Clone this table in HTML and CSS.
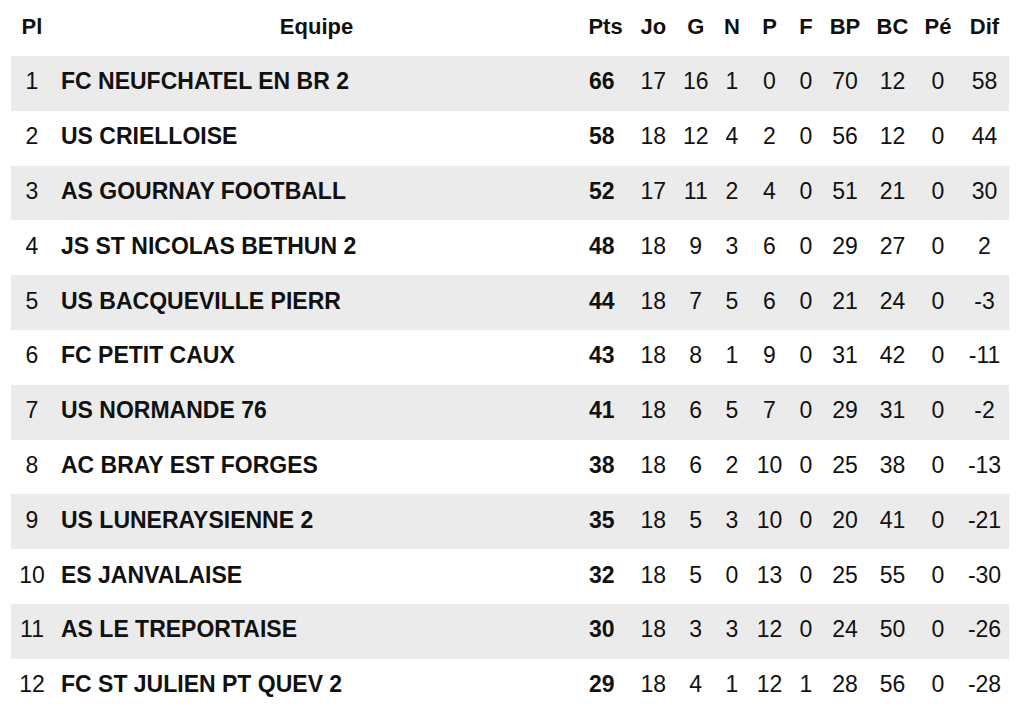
FILE: index.html
```html
<!DOCTYPE html>
<html lang="fr">
<head>
<meta charset="utf-8">
<title>Classement</title>
<link rel="stylesheet" href="styles.css">
</head>
<body>
<table class="standings">
  <colgroup>
    <col class="c-pl"><col class="c-team"><col class="c-pts"><col class="c-jo"><col class="c-g"><col class="c-n"><col class="c-p"><col class="c-f"><col class="c-bp"><col class="c-bc"><col class="c-pe"><col class="c-dif">
  </colgroup>
  <thead>
    <tr><th>Pl</th><th>Equipe</th><th>Pts</th><th>Jo</th><th>G</th><th>N</th><th>P</th><th>F</th><th>BP</th><th>BC</th><th>Pé</th><th>Dif</th></tr>
  </thead>
  <tbody>
    <tr><td>1</td><td class="team">FC NEUFCHATEL EN BR 2</td><td class="pts">66</td><td>17</td><td>16</td><td>1</td><td>0</td><td>0</td><td>70</td><td>12</td><td>0</td><td>58</td></tr>
    <tr><td>2</td><td class="team">US CRIELLOISE</td><td class="pts">58</td><td>18</td><td>12</td><td>4</td><td>2</td><td>0</td><td>56</td><td>12</td><td>0</td><td>44</td></tr>
    <tr><td>3</td><td class="team">AS GOURNAY FOOTBALL</td><td class="pts">52</td><td>17</td><td>11</td><td>2</td><td>4</td><td>0</td><td>51</td><td>21</td><td>0</td><td>30</td></tr>
    <tr><td>4</td><td class="team">JS ST NICOLAS BETHUN 2</td><td class="pts">48</td><td>18</td><td>9</td><td>3</td><td>6</td><td>0</td><td>29</td><td>27</td><td>0</td><td>2</td></tr>
    <tr><td>5</td><td class="team">US BACQUEVILLE PIERR</td><td class="pts">44</td><td>18</td><td>7</td><td>5</td><td>6</td><td>0</td><td>21</td><td>24</td><td>0</td><td>-3</td></tr>
    <tr><td>6</td><td class="team">FC PETIT CAUX</td><td class="pts">43</td><td>18</td><td>8</td><td>1</td><td>9</td><td>0</td><td>31</td><td>42</td><td>0</td><td>-11</td></tr>
    <tr><td>7</td><td class="team">US NORMANDE 76</td><td class="pts">41</td><td>18</td><td>6</td><td>5</td><td>7</td><td>0</td><td>29</td><td>31</td><td>0</td><td>-2</td></tr>
    <tr><td>8</td><td class="team">AC BRAY EST FORGES</td><td class="pts">38</td><td>18</td><td>6</td><td>2</td><td>10</td><td>0</td><td>25</td><td>38</td><td>0</td><td>-13</td></tr>
    <tr><td>9</td><td class="team">US LUNERAYSIENNE 2</td><td class="pts">35</td><td>18</td><td>5</td><td>3</td><td>10</td><td>0</td><td>20</td><td>41</td><td>0</td><td>-21</td></tr>
    <tr><td>10</td><td class="team">ES JANVALAISE</td><td class="pts">32</td><td>18</td><td>5</td><td>0</td><td>13</td><td>0</td><td>25</td><td>55</td><td>0</td><td>-30</td></tr>
    <tr><td>11</td><td class="team">AS LE TREPORTAISE</td><td class="pts">30</td><td>18</td><td>3</td><td>3</td><td>12</td><td>0</td><td>24</td><td>50</td><td>0</td><td>-26</td></tr>
    <tr><td>12</td><td class="team">FC ST JULIEN PT QUEV 2</td><td class="pts">29</td><td>18</td><td>4</td><td>1</td><td>12</td><td>1</td><td>28</td><td>56</td><td>0</td><td>-28</td></tr>
  </tbody>
</table>
</body>
</html>
```

FILE: styles.css
```css
html, body {
  margin: 0;
  padding: 0;
  background: #ffffff;
}

body {
  font-family: "Liberation Sans", Arial, Helvetica, sans-serif;
  color: #111111;
}

.standings {
  margin: 0 11px;
  width: 998px;
  table-layout: fixed;
  border-collapse: collapse;
  border-spacing: 0;
}

.c-pl { width: 42px; }
.c-team { width: 527px; }
.c-pts { width: 51px; }
.c-jo { width: 44.5px; }
.c-g { width: 40.5px; }
.c-n { width: 32px; }
.c-p { width: 43px; }
.c-f { width: 30px; }
.c-bp { width: 48px; }
.c-bc { width: 47px; }
.c-pe { width: 44px; }
.c-dif { width: 49px; }

.standings thead tr {
  height: 56px;
}

.standings th {
  padding: 0 0 2px;
  font-size: 22px;
  font-weight: bold;
  text-align: center;
  vertical-align: middle;
  white-space: nowrap;
}

.standings tbody tr {
  height: 54.8px;
}

.standings tbody tr:nth-child(odd) {
  background: #ebebeb;
}

.standings td {
  padding: 0 0 3px;
  font-size: 23px;
  text-align: center;
  vertical-align: middle;
  white-space: nowrap;
}

.standings td.team {
  text-align: left;
  padding-left: 8px;
  font-weight: bold;
}

.standings td.pts {
  text-align: left;
  padding-left: 9px;
  font-weight: bold;
}
```
